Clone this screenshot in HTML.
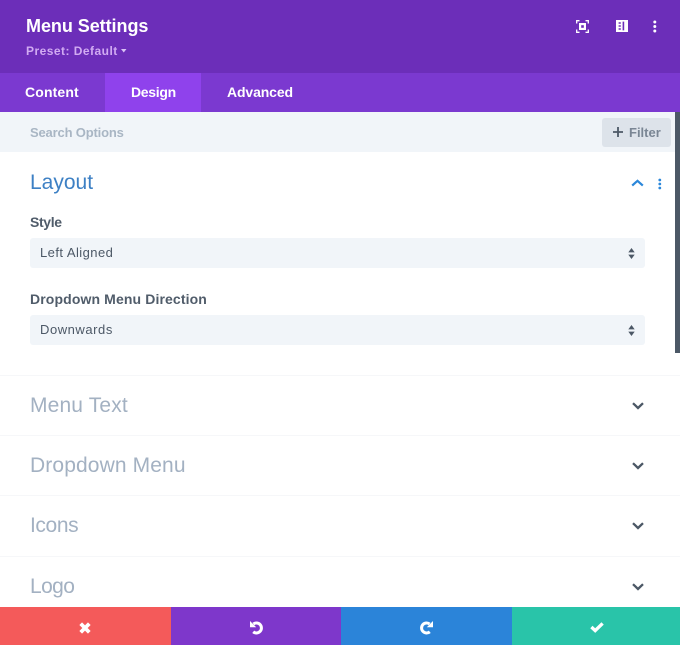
<!DOCTYPE html>
<html>
<head>
<meta charset="utf-8">
<style>
html,body{margin:0;padding:0}
body{width:680px;height:645px;overflow:hidden;background:#fff;position:relative;font-family:"Liberation Sans",sans-serif}
div,span.t{position:absolute;white-space:nowrap}
svg{position:absolute;overflow:visible}
.sec{font-size:21px;color:#a3b1c2;left:30px;line-height:24px}
.line{left:0;width:680px;height:1px;background:#f6f7f9}
.lab{font-size:14px;font-weight:bold;color:#505c6a;left:30px;line-height:18px}
.sel{left:30px;width:615px;height:30px;background:#f1f5f9;border-radius:3px}
.val{font-size:13px;color:#4c5866;left:40px;line-height:18px;letter-spacing:.45px}
</style>
</head>
<body>
<div style="left:0;top:0;width:680px;height:73px;background:#6c2eb9"></div>
<div style="left:26px;top:15px;font-size:18px;line-height:23px;font-weight:bold;color:#fff;letter-spacing:-.05px">Menu Settings</div>
<div style="left:26px;top:43px;font-size:12px;line-height:16px;font-weight:bold;color:#d1abf2;letter-spacing:.47px">Preset: Default</div>
<svg style="left:121px;top:49px" width="6" height="4"><path d="M0 0H5.5L2.75 3.5Z" fill="#d9c2f5"/></svg>

<svg style="left:576px;top:20px" width="13" height="13" fill="none" stroke="#fff" stroke-width="1.3"><path d="M0.7 3.5V0.7H3.5M9.5 0.7H12.3V3.5M12.3 9.5V12.3H9.5M3.5 12.3H0.7V9.5"/><rect x="3" y="3" width="7" height="7" fill="#fff" stroke="none"/><rect x="5.2" y="5.2" width="2.6" height="2.6" fill="#6c2eb9" stroke="none"/></svg>
<svg style="left:616px;top:20px" width="12" height="12"><path fill="#fff" fill-rule="evenodd" d="M0 0H12V12H0ZM6.6 1.6V10.4H8.2V1.6ZM2.6 2.2V3.8H4.8V2.2ZM2.6 5.2V6.8H4.8V5.2ZM2.6 8.2V9.8H4.8V8.2Z"/></svg>
<svg style="left:653px;top:20px" width="4" height="13" fill="#fff"><circle cx="1.8" cy="2" r="1.5"/><circle cx="1.8" cy="6.5" r="1.5"/><circle cx="1.8" cy="11" r="1.5"/></svg>

<div style="left:0;top:73px;width:680px;height:39px;background:#7b39d0"></div>
<div style="left:105px;top:73px;width:96px;height:39px;background:#8f42ec"></div>
<div style="left:25px;top:83px;font-size:14px;line-height:18px;font-weight:bold;color:#fff;letter-spacing:.14px">Content</div>
<div style="left:131px;top:83px;font-size:14px;line-height:18px;font-weight:bold;color:#fff;letter-spacing:-.3px">Design</div>
<div style="left:227px;top:83px;font-size:14px;line-height:18px;font-weight:bold;color:#fff;letter-spacing:-.12px">Advanced</div>

<div style="left:0;top:112px;width:680px;height:40px;background:#f1f5f9"></div>
<div style="left:30px;top:124px;font-size:13px;line-height:18px;font-weight:bold;color:#a9b6c4;letter-spacing:-.17px">Search Options</div>
<div style="left:602px;top:118px;width:69px;height:29px;background:#dde3ea;border-radius:3px"></div>
<svg style="left:613px;top:127px" width="10" height="10"><path d="M5 0V10M0 5H10" stroke="#4c5866" stroke-width="1.8"/></svg>
<div style="left:629px;top:124px;font-size:13px;line-height:18px;font-weight:bold;color:#7a8694">Filter</div>

<div style="left:675px;top:112px;width:5px;height:241px;background:#4c5866"></div>

<div style="left:30px;top:171px;font-size:21px;line-height:24px;color:#3d80c4">Layout</div>
<svg style="left:631px;top:179px" width="13" height="8" fill="none"><path d="M1.2 6.6L6.5 1.8L11.8 6.6" stroke="#2b87da" stroke-width="2.2"/></svg>
<svg style="left:658px;top:178px" width="4" height="12" fill="#2b87da"><circle cx="1.8" cy="2" r="1.4"/><circle cx="1.8" cy="6" r="1.4"/><circle cx="1.8" cy="10" r="1.4"/></svg>

<div class="lab" style="top:213px;letter-spacing:-.35px">Style</div>
<div class="sel" style="top:238px"></div>
<div class="val" style="top:244px">Left Aligned</div>
<svg style="left:628px;top:248px" width="7" height="11" fill="#4c5866"><path d="M0.3 4.4L3.5 0L6.7 4.4ZM0.3 6.6H6.7L3.5 11Z"/></svg>

<div class="lab" style="top:290px;letter-spacing:.12px">Dropdown Menu Direction</div>
<div class="sel" style="top:315px"></div>
<div class="val" style="top:321px;letter-spacing:.55px">Downwards</div>
<svg style="left:628px;top:325px" width="7" height="11" fill="#4c5866"><path d="M0.3 4.4L3.5 0L6.7 4.4ZM0.3 6.6H6.7L3.5 11Z"/></svg>

<div class="line" style="top:375px"></div>
<div class="sec" style="top:394px;letter-spacing:.15px">Menu Text</div>
<svg style="left:632px;top:402px" width="12" height="8" fill="none"><path d="M1 1.2L6 6L11 1.2" stroke="#4c5866" stroke-width="2.3"/></svg>
<div class="line" style="top:435px"></div>
<div class="sec" style="top:454px;letter-spacing:.12px">Dropdown Menu</div>
<svg style="left:632px;top:462px" width="12" height="8" fill="none"><path d="M1 1.2L6 6L11 1.2" stroke="#4c5866" stroke-width="2.3"/></svg>
<div class="line" style="top:495px"></div>
<div class="sec" style="top:514px;letter-spacing:-.4px">Icons</div>
<svg style="left:632px;top:522px" width="12" height="8" fill="none"><path d="M1 1.2L6 6L11 1.2" stroke="#4c5866" stroke-width="2.3"/></svg>
<div class="line" style="top:556px"></div>
<div class="sec" style="top:575px;letter-spacing:-.6px">Logo</div>
<svg style="left:632px;top:583px" width="12" height="8" fill="none"><path d="M1 1.2L6 6L11 1.2" stroke="#4c5866" stroke-width="2.3"/></svg>

<div style="left:0;top:607px;width:171px;height:38px;background:#f45a5a"></div>
<div style="left:171px;top:607px;width:170px;height:38px;background:#7e37cb"></div>
<div style="left:341px;top:607px;width:171px;height:38px;background:#2b84d9"></div>
<div style="left:512px;top:607px;width:168px;height:38px;background:#29c4a9"></div>

<svg style="left:79px;top:622px" width="12" height="12"><path d="M1.7 1.7L10.3 10.3M10.3 1.7L1.7 10.3" stroke="#fff" stroke-width="3.8"/></svg>
<svg style="left:249px;top:620px" width="15" height="15" fill="none"><path d="M4.4 4A5 5 0 1 1 4.2 11.8" stroke="#fff" stroke-width="3"/><path d="M1 1V7.2H7.2Z" fill="#fff"/></svg>
<svg style="left:419px;top:620px" width="15" height="15" fill="none"><path d="M10.6 4A5 5 0 1 0 10.8 11.8" stroke="#fff" stroke-width="3"/><path d="M14 1V7.2H7.8Z" fill="#fff"/></svg>
<svg style="left:590px;top:622px" width="14" height="11" fill="none"><path d="M1.4 5L5.2 8.6L12.6 1.4" stroke="#fff" stroke-width="3.3"/></svg>
</body>
</html>
